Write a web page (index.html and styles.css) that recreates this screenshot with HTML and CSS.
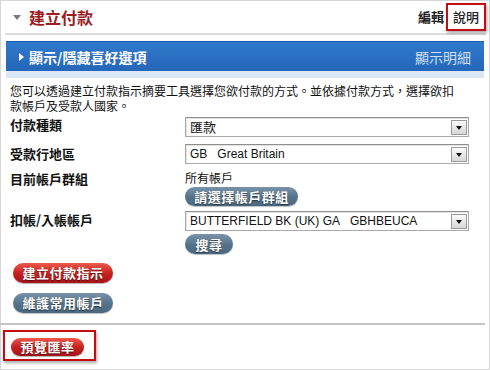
FILE: index.html
```html
<!DOCTYPE html>
<html lang="zh-Hant">
<head>
<meta charset="utf-8">
<title>建立付款</title>
<link rel="stylesheet" href="styles.css">
</head>
<body>
<div class="frame">
  <div class="header">
    <div class="title-wrap">
      <span class="caret-down"></span>
      <h1 class="title">建立付款</h1>
    </div>
    <div class="tools">
      <a class="tool">編輯</a>
      <a class="tool tool-help">說明</a>
    </div>
  </div>

  <div class="prefs">
    <div class="prefs-bar">
      <div class="prefs-left"><span class="caret-right"></span><span class="prefs-title">顯示/隱藏喜好選項</span></div>
      <span class="prefs-detail">顯示明細</span>
    </div>
    <div class="prefs-strip"></div>
  </div>

  <div class="panel">
    <p class="intro">您可以透過建立付款指示摘要工具選擇您欲付款的方式。並依據付款方式，選擇欲扣款帳戶及受款人國家。</p>

    <div class="form">
      <div class="label l-type">付款種類</div>
      <div class="field f-type">
        <div class="select"><span class="select-text cjk">匯款</span><span class="select-btn"><span class="tri"></span></span></div>
      </div>

      <div class="label l-region">受款行地區</div>
      <div class="field f-region">
        <div class="select"><span class="select-text">GB&nbsp;&nbsp;&nbsp;Great Britain</span><span class="select-btn"><span class="tri"></span></span></div>
      </div>

      <div class="label l-group">目前帳戶群組</div>
      <div class="field f-group">
        <div class="group-name">所有帳戶</div>
        <button class="btn btn-steel btn-group">請選擇帳戶群組</button>
      </div>

      <div class="label l-acct">扣帳/入帳帳戶</div>
      <div class="field f-acct">
        <div class="select"><span class="select-text">BUTTERFIELD BK (UK) GA&nbsp;&nbsp;&nbsp;GBHBEUCA</span><span class="select-btn"><span class="tri"></span></span></div>
        <button class="btn btn-steel btn-search">搜尋</button>
      </div>
    </div>

    <div class="actions">
      <button class="btn btn-red btn-wide">建立付款指示</button>
      <button class="btn btn-steel btn-wide">維護常用帳戶</button>
    </div>
  </div>

  <div class="footer">
    <div class="highlight">
      <button class="btn btn-red btn-rate">預覽匯率</button>
    </div>
  </div>
</div>
</body>
</html>
```

FILE: styles.css
```css
* { box-sizing: border-box; }
html, body { margin: 0; padding: 0; background: #fff; }
body {
  font-family: "Noto Sans CJK TC", "Noto Sans", sans-serif;
  color: #111;
}
.frame {
  width: 490px;
  height: 370px;
  border: 1px solid #d6d6d6;
  display: flex;
  flex-direction: column;
  position: relative;
}

/* header */
.header {
  height: 34px;
  margin: 0 3px 0 4px;
  border-bottom: 2px solid #dcdcdc;
  display: flex;
  justify-content: space-between;
  align-items: flex-start;
}
.title-wrap {
  display: flex;
  align-items: center;
  height: 32px;
  padding-left: 8px;
}
.caret-down {
  width: 0; height: 0;
  border-left: 4px solid transparent;
  border-right: 4px solid transparent;
  border-top: 5px solid #7a7a7a;
  margin-right: 8px;
  margin-top: 1px;
}
.title {
  margin: 0;
  font-size: 16px;
  line-height: 20px;
  font-weight: 700;
  color: #9b1c22;
}
.tools {
  display: flex;
  align-items: center;
  padding-top: 2px;
}
.tool {
  font-size: 13px;
  line-height: 16px;
  font-weight: 700;
  color: #222;
  cursor: pointer;
}
.tool-help {
  margin-left: 2px;
  width: 40px;
  height: 28px;
  border: 2px solid #c40d12;
  box-shadow: 1px 2px 3px rgba(0,0,0,0.35);
  display: flex;
  align-items: center;
  justify-content: center;
  font-weight: 500;
  background: #fff;
}

/* prefs bar */
.prefs {
  margin: 6px 5px 0 5px;
}
.prefs-bar {
  height: 30px;
  background: linear-gradient(#3079cc, #2566b8);
  border-top: 1px solid #1f5aa6;
  display: flex;
  align-items: center;
  justify-content: space-between;
  padding: 0 13px 0 13px;
}
.prefs-left { display: flex; align-items: center; }
.caret-right {
  width: 0; height: 0;
  border-top: 4.5px solid transparent;
  border-bottom: 4.5px solid transparent;
  border-left: 5px solid #fff;
  margin-right: 5px;
}
.prefs-title {
  color: #fff;
  font-size: 14px;
  font-weight: 700;
  line-height: 18px;
}
.prefs-detail {
  color: #cfe0f6;
  font-size: 14px;
  line-height: 18px;
}
.prefs-strip {
  height: 7px;
  background: #dbe7f5;
}

/* panel */
.panel {
  padding: 0 0 0 9px;
  flex: 0 0 auto;
}
.intro {
  width: 450px;
  margin: 5px 0 0 0;
  font-size: 12px;
  line-height: 15px;
  color: #111;
}
.form {
  display: grid;
  grid-template-columns: 175px 284px;
  margin-top: 1px;
}
.label {
  font-size: 13px;
  font-weight: 700;
  line-height: 16px;
  color: #111;
}
.l-type { padding-top: 3px; }
.f-type { padding-top: 3px; }
.l-region { padding-top: 9px; }
.f-region { padding-top: 7px; }
.l-group { padding-top: 7px; }
.f-group { padding-top: 6px; }
.l-acct { padding-top: 6px; }
.f-acct { padding-top: 5px; }

.select {
  height: 20px;
  border: 1px solid #a9a9a9;
  border-top-color: #8e8e8e;
  box-shadow: inset 1px 1px 0 #e4e4e4;
  background: #fff;
  display: flex;
  align-items: center;
  justify-content: space-between;
  padding: 0 1px 0 4px;
}
.select-text {
  font-family: "Liberation Sans", Arial, sans-serif;
  font-size: 12px;
  line-height: 14px;
  color: #111;
  white-space: pre;
}
.select-text.cjk {
  font-family: "Noto Sans CJK TC", sans-serif;
  font-size: 13px;
}
.select-btn {
  width: 16px;
  height: 15px;
  border: 1px solid #9a9a9a;
  background: linear-gradient(#fbfbfb, #d6d6d6);
  display: flex;
  align-items: center;
  justify-content: center;
}
.tri {
  width: 0; height: 0;
  border-left: 3.5px solid transparent;
  border-right: 3.5px solid transparent;
  border-top: 4px solid #111;
  margin-top: 1px;
}

.group-name {
  font-size: 12px;
  line-height: 16px;
  margin-bottom: 1px;
}

.btn {
  display: block;
  border: none;
  font-family: "Noto Sans CJK TC", sans-serif;
  font-size: 13px;
  font-weight: 700;
  color: #fff;
  letter-spacing: 0.5px;
  text-shadow: 0 1px 1px rgba(0,0,0,0.55);
  border-radius: 10px;
  padding: 0;
  height: 19px;
  line-height: 19px;
  cursor: pointer;
}
.btn-steel {
  background: linear-gradient(#7893a9, #55728a 55%, #4a6880);
  box-shadow: 0 1px 1px rgba(0,0,0,0.25);
}
.btn-red {
  background: linear-gradient(#ec5a4d, #c8221f 50%, #a9121a);
  box-shadow: 0 1px 1px rgba(0,0,0,0.3);
}
.btn-group { width: 113px; }
.btn-search { width: 48px; height: 20px; margin-top: 3px; }
.actions {
  display: flex;
  flex-direction: column;
  align-items: flex-start;
  gap: 10px;
  padding-left: 3px;
  margin-top: 9px;
}
.btn-wide { width: 100px; height: 20px; line-height: 20px; }

/* footer */
.footer {
  margin-top: 10px;
  margin-right: 4px;
  border-top: 2px solid #c4c4c4;
  padding: 5px 0 0 3px;
  margin-left: -1px;
}
.highlight {
  width: 93px;
  height: 31px;
  border: 2px solid #c40d12;
  box-shadow: 1px 2px 3px rgba(0,0,0,0.35);
  padding: 6px 0 0 6px;
}
.btn-rate { width: 73px; height: 18px; line-height: 18px; }
```
